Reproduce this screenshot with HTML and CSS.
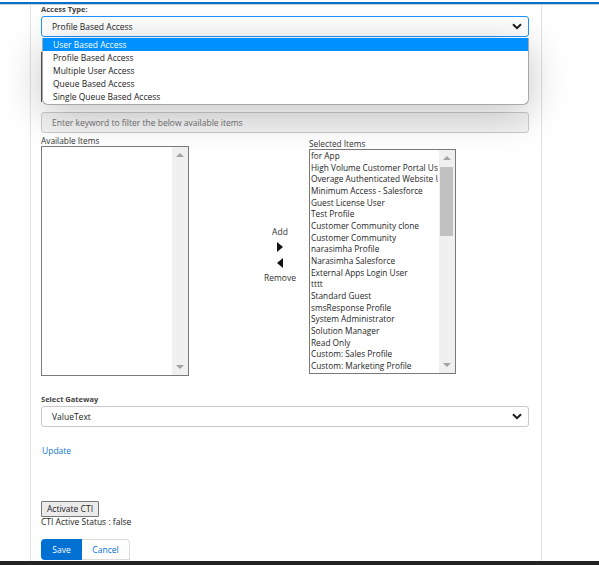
FILE: index.html
```html
<!DOCTYPE html>
<html>
<head>
<meta charset="utf-8">
<link rel="stylesheet" href="styles.css">
</head>
<body>
<div class="topbar"></div>
<div class="page">
  <div class="label bold">Access Type:</div>
  <div class="select-wrap">
    <div class="select focused">
      <span>Profile Based Access</span>
      <svg class="chev" width="10" height="7" viewBox="0 0 10 7"><path d="M1 1.2 L5 5.2 L9 1.2" fill="none" stroke="#1b1b1b" stroke-width="2"/></svg>
    </div>
    <div class="dropdown">
      <div class="opt active">User Based Access</div>
      <div class="opt">Profile Based Access</div>
      <div class="opt">Multiple User Access</div>
      <div class="opt">Queue Based Access</div>
      <div class="opt">Single Queue Based Access</div>
    </div>
  </div>
  <div class="hidden-area"><div class="hidden-box"></div></div>
  <div class="filter">Enter keyword to filter the below available items</div>
  <div class="lists">
    <div class="col">
      <div class="label">Available Items</div>
      <div class="listbox avail">
        <div class="items"></div>
        <div class="sbar"><span class="up"></span><span class="down"></span></div>
      </div>
    </div>
    <div class="mid">
      <div class="mid-inner">
        <div>Add</div>
        <div class="arrow right"></div>
        <div class="arrow left"></div>
        <div>Remove</div>
      </div>
    </div>
    <div class="col sel">
      <div class="label">Selected Items</div>
      <div class="listbox selbox">
        <div class="items">
          <div>for App</div>
          <div>High Volume Customer Portal User</div>
          <div>Overage Authenticated Website User</div>
          <div>Minimum Access - Salesforce</div>
          <div>Guest License User</div>
          <div>Test Profile</div>
          <div>Customer Community clone</div>
          <div>Customer Community</div>
          <div>narasimha Profile</div>
          <div>Narasimha Salesforce</div>
          <div>External Apps Login User</div>
          <div>tttt</div>
          <div>Standard Guest</div>
          <div>smsResponse Profile</div>
          <div>System Administrator</div>
          <div>Solution Manager</div>
          <div>Read Only</div>
          <div>Custom: Sales Profile</div>
          <div>Custom: Marketing Profile</div>
          <div>Custom: Support Profile</div>
        </div>
        <div class="sbar"><span class="up"></span><span class="thumb"></span><span class="down"></span></div>
      </div>
    </div>
  </div>
  <div class="label bold gw">Select Gateway</div>
  <div class="select plain">
    <span>ValueText</span>
    <svg class="chev" width="10" height="7" viewBox="0 0 10 7"><path d="M1 1.2 L5 5.2 L9 1.2" fill="none" stroke="#1b1b1b" stroke-width="2"/></svg>
  </div>
  <a class="update">Update</a>
  <div class="cti-btn">Activate CTI</div>
  <div class="status">CTI Active Status : false</div>
  <div class="actions">
    <div class="btn save">Save</div>
    <div class="btn cancel">Cancel</div>
  </div>
</div>
<div class="bottombar"></div>
</body>
</html>
```
FILE: styles.css
```css
html, body { margin: 0; padding: 0; background: #fff; }
body {
  font-family: "Open Sans", "Noto Sans", sans-serif;
  font-size: 8.2px;
  color: #2b2b2b;
  height: 565px;
  overflow: hidden;
}
.topbar {
  margin-top: 2px;
  height: 2px;
  background: #0070d2;
  border-bottom: 1px solid #cfcfcf;
}
.page {
  margin-left: 30px;
  width: 488px;
  height: 556px;
  border-left: 1px solid #e2e2e2;
  border-right: 1px solid #e2e2e2;
  padding: 0 12px 0 10px;
  box-sizing: content-box;
}
.label { line-height: 9px; height: 11px; color: #3a3a3a; }
.bold { font-weight: 700; font-size: 7.5px; color: #444; }
.select-wrap { position: relative; }
.select {
  height: 21px;
  box-sizing: border-box;
  border: 1px solid #c9c9c9;
  border-radius: 3px;
  display: flex;
  align-items: center;
  justify-content: space-between;
  padding: 0 6px 0 10px;
  font-size: 8.5px;
  color: #222;
  background: #fff;
}
.select.focused { border-color: #1b96ff; }
.chev { display: block; }
.dropdown {
  position: absolute;
  top: 22px;
  left: 1px;
  right: 0;
  background: #fff;
  border: 1px solid #a8a8a8;
  border-top: none;
  border-radius: 0 0 6px 6px;
  box-shadow: 0 8px 40px rgba(0,0,0,0.24);
  padding-bottom: 1px;
  z-index: 5;
}
.opt {
  height: 13px;
  line-height: 13px;
  padding-left: 10px;
  font-size: 8.5px;
  color: #222;
}
.opt.active { background: #0090ff; color: #fff; }
.hidden-area { height: 75px; position: relative; }
.hidden-box {
  position: absolute;
  left: 0; top: 15px;
  width: 40px; height: 50px;
  border-left: 1px solid #555;
}
.filter {
  height: 21px;
  box-sizing: border-box;
  border: 1px solid #cbcbcb;
  border-radius: 3px;
  background: #f3f3f3;
  line-height: 19px;
  padding-left: 10px;
  color: #707070;
  font-size: 8.5px;
}
.lists {
  display: grid;
  grid-template-columns: 148px 120px 147px;
  margin-top: 2px;
  height: 242px;
}
.col .label { height: 11px; line-height: 11px; color: #333; font-size: 8.3px; }
.col.sel { padding-top: 3px; }
.listbox {
  position: relative;
  border: 1px solid #7a7a7a;
  box-sizing: border-box;
  background: #fff;
  overflow: hidden;
}
.avail { height: 230px; }
.selbox { height: 225px; }
.items { padding: 0 0 0 1px; margin-right: 17px; white-space: nowrap; overflow: hidden; font-size: 8.3px; color: #1e1e1e; }
.items div { height: 11.67px; line-height: 11.67px; }
.sbar {
  position: absolute;
  top: 0; right: 0; bottom: 0;
  width: 16px;
  background: #f0f0f0;
}
.up, .down {
  position: absolute;
  left: 4px;
  width: 0; height: 0;
  border-left: 4px solid transparent;
  border-right: 4px solid transparent;
}
.up { top: 6px; border-bottom: 4px solid #a3a3a3; }
.down { bottom: 6px; border-top: 4px solid #a3a3a3; }
.thumb {
  position: absolute;
  left: 1px; right: 2px;
  top: 17px; height: 69px;
  background: #c1c1c1;
}
.mid { display: flex; align-items: center; padding-left: 62px; }
.mid-inner { display: flex; flex-direction: column; align-items: center; width: 60px; margin-top: -3px; line-height: 11px; color: #333; font-size: 8.5px; }
.mid-inner div:first-child { margin-bottom: 2px; }
.arrow { width: 0; height: 0; border-top: 5px solid transparent; border-bottom: 5px solid transparent; margin: 3px 0; }
.arrow.right { border-left: 6px solid #111; }
.arrow.left { border-right: 6px solid #111; margin-bottom: 4px; }
.gw { margin-top: 17px; height: 11px; line-height: 11px; }
.select.plain { margin-top: 1px; }
.update {
  display: block;
  margin-top: 18px;
  color: #0a78d0;
  font-size: 8.5px;
  line-height: 11px;
  padding-left: 1px;
}
.cti-btn {
  display: inline-block;
  margin-top: 45px;
  height: 16px;
  box-sizing: border-box;
  border: 1px solid #767676;
  background: #ebebeb;
  line-height: 14px;
  padding: 0 5px;
  color: #222;
  border-radius: 1px;
  font-size: 8.5px;
}
.status { line-height: 11px; color: #222; font-size: 8.5px; margin-top: -1px; }
.actions { display: flex; margin-top: 12px; }
.btn {
  height: 21px;
  line-height: 21px;
  box-sizing: border-box;
  font-size: 8.5px;
  text-align: center;
}
.save { width: 41px; background: #0070d2; color: #fff; border-radius: 4px 0 0 4px; }
.cancel { width: 48px; border: 1px solid #dddbda; border-left: none; color: #0070d2; line-height: 19px; border-radius: 0 4px 0 0; background: #fff; }
.bottombar { position: fixed; left: 0; right: 0; bottom: 0; height: 4px; background: #242424; }
```
